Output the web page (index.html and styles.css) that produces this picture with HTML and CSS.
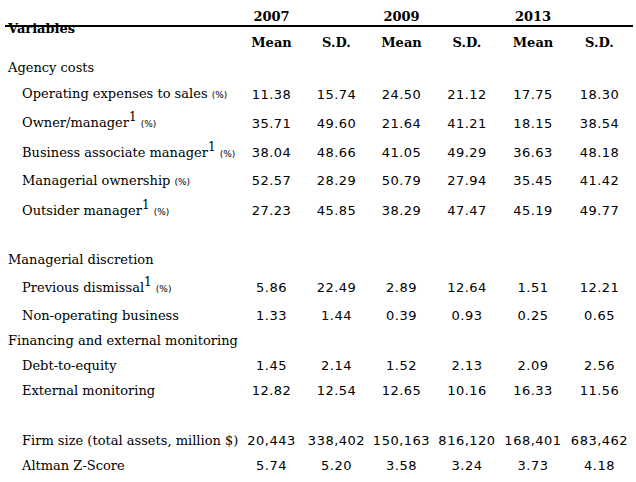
FILE: index.html
```html
<!DOCTYPE html>
<html>
<head>
<meta charset="utf-8">
<link rel="stylesheet" href="styles.css">
</head>
<body>
<div class="table">
  <div class="head">
    <div class="var">Variables</div>
    <div class="rule"></div>
    <div class="year y1">2007</div>
    <div class="year y2">2009</div>
    <div class="year y3">2013</div>
    <div class="sub c2">Mean</div>
    <div class="sub c3">S.D.</div>
    <div class="sub c4">Mean</div>
    <div class="sub c5">S.D.</div>
    <div class="sub c6">Mean</div>
    <div class="sub c7">S.D.</div>
  </div>

  <div class="row h25"><div class="lab sec">Agency costs</div></div>
  <div class="row h28"><div class="lab">Operating expenses to sales <span class="pct">(%)</span></div><div class="n">11.38</div><div class="n">15.74</div><div class="n">24.50</div><div class="n">21.12</div><div class="n">17.75</div><div class="n">18.30</div></div>
  <div class="row h305"><div class="lab">Owner/manager<sup>1</sup> <span class="pct">(%)</span></div><div class="n">35.71</div><div class="n">49.60</div><div class="n">21.64</div><div class="n">41.21</div><div class="n">18.15</div><div class="n">38.54</div></div>
  <div class="row h28"><div class="lab">Business associate manager<sup>1</sup> <span class="pct">(%)</span></div><div class="n">38.04</div><div class="n">48.66</div><div class="n">41.05</div><div class="n">49.29</div><div class="n">36.63</div><div class="n">48.18</div></div>
  <div class="row h285"><div class="lab">Managerial ownership <span class="pct">(%)</span></div><div class="n">52.57</div><div class="n">28.29</div><div class="n">50.79</div><div class="n">27.94</div><div class="n">35.45</div><div class="n">41.42</div></div>
  <div class="row h31"><div class="lab">Outsider manager<sup>1</sup> <span class="pct">(%)</span></div><div class="n">27.23</div><div class="n">45.85</div><div class="n">38.29</div><div class="n">47.47</div><div class="n">45.19</div><div class="n">49.77</div></div>
  <div class="row h21"></div>
  <div class="row h25"><div class="lab sec">Managerial discretion</div></div>
  <div class="row h31"><div class="lab">Previous dismissal<sup>1</sup> <span class="pct">(%)</span></div><div class="n">5.86</div><div class="n">22.49</div><div class="n">2.89</div><div class="n">12.64</div><div class="n">1.51</div><div class="n">12.21</div></div>
  <div class="row h25"><div class="lab">Non-operating business</div><div class="n">1.33</div><div class="n">1.44</div><div class="n">0.39</div><div class="n">0.93</div><div class="n">0.25</div><div class="n">0.65</div></div>
  <div class="row h25"><div class="lab sec">Financing and external monitoring</div></div>
  <div class="row h25"><div class="lab">Debt-to-equity</div><div class="n">1.45</div><div class="n">2.14</div><div class="n">1.52</div><div class="n">2.13</div><div class="n">2.09</div><div class="n">2.56</div></div>
  <div class="row h25"><div class="lab">External monitoring</div><div class="n">12.82</div><div class="n">12.54</div><div class="n">12.65</div><div class="n">10.16</div><div class="n">16.33</div><div class="n">11.56</div></div>
  <div class="row h25"></div>
  <div class="row h25"><div class="lab">Firm size (total assets, million $)</div><div class="n">20,443</div><div class="n">338,402</div><div class="n">150,163</div><div class="n">816,120</div><div class="n">168,401</div><div class="n">683,462</div></div>
  <div class="row h25"><div class="lab">Altman Z-Score</div><div class="n">5.74</div><div class="n">5.20</div><div class="n">3.58</div><div class="n">3.24</div><div class="n">3.73</div><div class="n">4.18</div></div>
</div>
</body>
</html>
```

FILE: styles.css
```css
html, body {
  margin: 0;
  padding: 0;
  background: #ffffff;
}

.table {
  margin-left: 5px;
  width: 628px;
  color: #000;
  font-family: "DejaVu Serif", "Liberation Serif", serif;
  font-size: 13px;
}

.head,
.row {
  display: grid;
  grid-template-columns: 234px 65px 65px 65px 66px 66px 67px;
}

.head {
  grid-template-rows: 30px 25.5px;
}

.var {
  grid-row: 1 / 3;
  grid-column: 1;
  align-self: center;
  padding: 2px 0 0 3px;
  font-weight: bold;
  line-height: 16px;
}

.rule {
  grid-row: 1;
  grid-column: 1 / -1;
  align-self: end;
  height: 2px;
  margin-bottom: 3px;
  background: #000;
}

.year {
  grid-row: 1;
  align-self: center;
  padding-top: 4px;
  text-align: center;
  font-weight: bold;
  line-height: 16px;
}

.y1 { grid-column: 2; }
.y2 { grid-column: 4; }
.y3 { grid-column: 6; }

.sub {
  grid-row: 2;
  align-self: center;
  text-align: center;
  font-weight: bold;
  line-height: 16px;
}

.c2 { grid-column: 2; }
.c3 { grid-column: 3; }
.c4 { grid-column: 4; }
.c5 { grid-column: 5; }
.c6 { grid-column: 6; }
.c7 { grid-column: 7; }

.row {
  align-items: center;
  line-height: 16px;
}

.h21 { height: 21px; }
.h25 { height: 25px; }
.h28 { height: 28px; }
.h285 { height: 28.5px; }
.h305 { height: 30.5px; }
.h31 { height: 31px; }

.lab {
  padding-left: 17px;
  white-space: nowrap;
}

.lab.sec {
  padding-left: 3px;
}

.pct {
  font-family: "DejaVu Sans", sans-serif;
  font-size: 9px;
}

sup {
  font-size: 12px;
  line-height: 0;
  vertical-align: 6px;
}

.n {
  text-align: center;
  font-family: "DejaVu Sans", sans-serif;
  font-size: 13px;
  letter-spacing: 0.5px;
}
```
